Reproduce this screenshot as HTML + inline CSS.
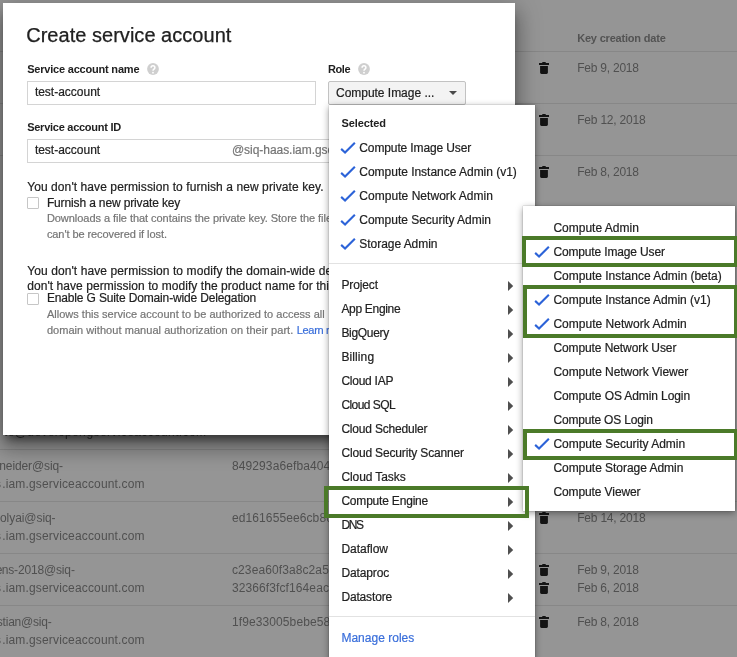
<!DOCTYPE html>
<html><head><meta charset="utf-8"><title>Create service account</title>
<style>
*{box-sizing:border-box;margin:0;padding:0}
html,body{width:737px;height:657px;overflow:hidden;background:#959595;font-family:"Liberation Sans",sans-serif}
body{position:relative}
.a{position:absolute;display:block}
.t{position:absolute;white-space:nowrap;-webkit-text-stroke-width:.2px}
.hl{position:absolute;left:0;width:737px;height:1px;background:#878787}
#dlg{position:absolute;left:3px;top:3px;width:512px;height:432px;background:#fff;box-shadow:0 8px 9px -4px rgba(0,0,0,.5),0 13px 19px 2px rgba(0,0,0,.24),0 5px 24px 4px rgba(0,0,0,.18)}
#clip{position:absolute;left:0;top:0;width:515px;height:435px;overflow:hidden}
.inp{position:absolute;border:1px solid #d4d4d4;background:#fff}
.q{position:absolute;width:12px;height:12px;border-radius:50%;background:#d6d6d6;color:#fff;font-size:10px;font-weight:bold;line-height:12.500px;text-align:center}
.cb{position:absolute;width:12px;height:12px;border:1px solid #c6c6c6;border-radius:1px;background:#fff}
#btn{position:absolute;left:328px;top:81px;width:138px;height:24px;border:1px solid #c2c2c2;border-radius:2px;background:#f3f3f3}
#menu{position:absolute;left:328.500px;top:105.300px;width:206px;height:570px;background:#fff;box-shadow:0 2px 7px rgba(0,0,0,.4),0 0 1px rgba(0,0,0,.4)}
#sub{position:absolute;left:523px;top:206.400px;width:212.400px;height:305px;background:#fff;box-shadow:0 2px 7px rgba(0,0,0,.4),0 0 1px rgba(0,0,0,.4)}
.sep{position:absolute;height:1px;background:#e2e2e2}
.gb{position:absolute;border:4px solid #4b7a29}
#root{position:absolute;left:0;top:0;width:737px;height:657px;will-change:transform}
</style></head><body><div id="root">

<div class="hl" style="top:51px"></div>
<div class="hl" style="top:103px"></div>
<div class="hl" style="top:155px"></div>
<div class="hl" style="top:449px"></div>
<div class="hl" style="top:501px"></div>
<div class="hl" style="top:553px"></div>
<div class="hl" style="top:605px"></div>
<div class="t" style="left:577.20px;top:31px;font-size:11px;line-height:14px;letter-spacing:-0.193px;color:#535353;font-weight:bold;-webkit-text-stroke-width:0;-webkit-text-stroke-width:0;">Key creation date</div>
<div class="t" style="left:577.20px;top:60px;font-size:12px;line-height:16px;letter-spacing:-0.228px;color:#505050;-webkit-text-stroke-width:0;">Feb 9, 2018</div>
<div class="t" style="left:577.20px;top:112px;font-size:12px;line-height:16px;letter-spacing:-0.204px;color:#505050;-webkit-text-stroke-width:0;">Feb 12, 2018</div>
<div class="t" style="left:577.20px;top:164px;font-size:12px;line-height:16px;letter-spacing:-0.228px;color:#505050;-webkit-text-stroke-width:0;">Feb 8, 2018</div>
<div class="t" style="left:577.20px;top:510px;font-size:12px;line-height:16px;letter-spacing:-0.204px;color:#505050;-webkit-text-stroke-width:0;">Feb 14, 2018</div>
<div class="t" style="left:577.20px;top:562px;font-size:12px;line-height:16px;letter-spacing:-0.228px;color:#505050;-webkit-text-stroke-width:0;">Feb 9, 2018</div>
<div class="t" style="left:577.20px;top:580px;font-size:12px;line-height:16px;letter-spacing:-0.228px;color:#505050;-webkit-text-stroke-width:0;">Feb 6, 2018</div>
<div class="t" style="left:577.20px;top:614px;font-size:12px;line-height:16px;letter-spacing:-0.228px;color:#505050;-webkit-text-stroke-width:0;">Feb 8, 2018</div>
<div class="t" style="left:-0.70px;top:458px;font-size:12px;line-height:16px;letter-spacing:-0.118px;color:#505050;-webkit-text-stroke-width:0;">neider@siq-</div>
<div class="t" style="left:0.00px;top:510px;font-size:12px;line-height:16px;letter-spacing:-0.067px;color:#505050;-webkit-text-stroke-width:0;">olyai@siq-</div>
<div class="t" style="left:-4.30px;top:562px;font-size:12px;line-height:16px;letter-spacing:0.000px;color:#505050;-webkit-text-stroke-width:0;">e</div>
<div class="t" style="left:1.70px;top:562px;font-size:12px;line-height:16px;letter-spacing:-0.153px;color:#505050;-webkit-text-stroke-width:0;">ns-2018@siq-</div>
<div class="t" style="left:-3.20px;top:614px;font-size:12px;line-height:16px;letter-spacing:0.000px;color:#505050;-webkit-text-stroke-width:0;">s</div>
<div class="t" style="left:2.60px;top:614px;font-size:12px;line-height:16px;letter-spacing:-0.221px;color:#505050;-webkit-text-stroke-width:0;">tian@siq-</div>
<div class="t" style="left:2.20px;top:476px;font-size:12px;line-height:16px;letter-spacing:0.160px;color:#505050;-webkit-text-stroke-width:0;">.iam.gserviceaccount.com</div>
<div class="t" style="left:-5.00px;top:476px;font-size:12px;line-height:16px;letter-spacing:0.000px;color:#505050;-webkit-text-stroke-width:0;">s</div>
<div class="t" style="left:2.20px;top:528px;font-size:12px;line-height:16px;letter-spacing:0.160px;color:#505050;-webkit-text-stroke-width:0;">.iam.gserviceaccount.com</div>
<div class="t" style="left:-5.00px;top:528px;font-size:12px;line-height:16px;letter-spacing:0.000px;color:#505050;-webkit-text-stroke-width:0;">s</div>
<div class="t" style="left:2.20px;top:580px;font-size:12px;line-height:16px;letter-spacing:0.160px;color:#505050;-webkit-text-stroke-width:0;">.iam.gserviceaccount.com</div>
<div class="t" style="left:-5.00px;top:580px;font-size:12px;line-height:16px;letter-spacing:0.000px;color:#505050;-webkit-text-stroke-width:0;">s</div>
<div class="t" style="left:2.20px;top:632px;font-size:12px;line-height:16px;letter-spacing:0.160px;color:#505050;-webkit-text-stroke-width:0;">.iam.gserviceaccount.com</div>
<div class="t" style="left:-5.00px;top:632px;font-size:12px;line-height:16px;letter-spacing:0.000px;color:#505050;-webkit-text-stroke-width:0;">s</div>
<div class="t" style="left:232.00px;top:458px;font-size:12px;line-height:16px;letter-spacing:0.100px;color:#505050;-webkit-text-stroke-width:0;">849293a6efba4041</div>
<div class="t" style="left:232.00px;top:510px;font-size:12px;line-height:16px;letter-spacing:0.100px;color:#505050;-webkit-text-stroke-width:0;">ed161655ee6cb8c</div>
<div class="t" style="left:232.00px;top:562px;font-size:12px;line-height:16px;letter-spacing:0.100px;color:#505050;-webkit-text-stroke-width:0;">c23ea60f3a8c2a5e</div>
<div class="t" style="left:232.00px;top:580px;font-size:12px;line-height:16px;letter-spacing:0.100px;color:#505050;-webkit-text-stroke-width:0;">32366f3fcf164eac</div>
<div class="t" style="left:232.00px;top:614px;font-size:12px;line-height:16px;letter-spacing:0.100px;color:#505050;-webkit-text-stroke-width:0;">1f9e33005bebe58d</div>
<div class="t" style="left:4.00px;top:424px;font-size:12px;line-height:16px;letter-spacing:0.378px;color:#3a3a3a;-webkit-text-stroke-width:0;">te@developer.gserviceaccount.com</div>
<svg class="a" style="left:539px;top:62px;width:10px;height:12px" viewBox="0 0 10 12"><path d="M0 1h3l.6-.9h2.800l.6.9h3v2H0zM1.100 4h7.800v6.500c0 .8-.6 1.400-1.400 1.400h-5c-.8 0-1.400-.6-1.400-1.400z" fill="#141414"/></svg>
<svg class="a" style="left:539px;top:114px;width:10px;height:12px" viewBox="0 0 10 12"><path d="M0 1h3l.6-.9h2.800l.6.9h3v2H0zM1.100 4h7.800v6.500c0 .8-.6 1.400-1.400 1.400h-5c-.8 0-1.400-.6-1.400-1.400z" fill="#141414"/></svg>
<svg class="a" style="left:539px;top:166px;width:10px;height:12px" viewBox="0 0 10 12"><path d="M0 1h3l.6-.9h2.800l.6.9h3v2H0zM1.100 4h7.800v6.500c0 .8-.6 1.400-1.400 1.400h-5c-.8 0-1.400-.6-1.400-1.400z" fill="#141414"/></svg>
<svg class="a" style="left:539px;top:512px;width:10px;height:12px" viewBox="0 0 10 12"><path d="M0 1h3l.6-.9h2.800l.6.9h3v2H0zM1.100 4h7.800v6.500c0 .8-.6 1.400-1.400 1.400h-5c-.8 0-1.400-.6-1.400-1.400z" fill="#141414"/></svg>
<svg class="a" style="left:539px;top:564px;width:10px;height:12px" viewBox="0 0 10 12"><path d="M0 1h3l.6-.9h2.800l.6.9h3v2H0zM1.100 4h7.800v6.500c0 .8-.6 1.400-1.400 1.400h-5c-.8 0-1.400-.6-1.400-1.400z" fill="#141414"/></svg>
<svg class="a" style="left:539px;top:582px;width:10px;height:12px" viewBox="0 0 10 12"><path d="M0 1h3l.6-.9h2.800l.6.9h3v2H0zM1.100 4h7.800v6.500c0 .8-.6 1.400-1.400 1.400h-5c-.8 0-1.400-.6-1.400-1.400z" fill="#141414"/></svg>
<svg class="a" style="left:539px;top:616px;width:10px;height:12px" viewBox="0 0 10 12"><path d="M0 1h3l.6-.9h2.800l.6.9h3v2H0zM1.100 4h7.800v6.500c0 .8-.6 1.400-1.400 1.400h-5c-.8 0-1.400-.6-1.400-1.400z" fill="#141414"/></svg>
<div id="dlg"></div><div id="clip">
<div class="inp" style="left:27px;top:81px;width:289px;height:24px"></div>
<div class="inp" style="left:27px;top:139px;width:320px;height:24px"></div>
<div class="cb" style="left:27px;top:197px"></div>
<div class="cb" style="left:27px;top:293px"></div>
<svg class="a" style="left:147px;top:63px;width:12px;height:12px" viewBox="0 0 12 12"><circle cx="6" cy="6" r="5.900" fill="#cfcfcf"/><path d="M4.100 4.700a1.900 1.900 0 0 1 3.800 0c0 1.300-1.900 1.500-1.900 3" fill="none" stroke="#fff" stroke-width="1.500"/><circle cx="6" cy="9.700" r=".9" fill="#fff"/></svg>
<svg class="a" style="left:358.2px;top:63px;width:12px;height:12px" viewBox="0 0 12 12"><circle cx="6" cy="6" r="5.900" fill="#cfcfcf"/><path d="M4.100 4.700a1.900 1.900 0 0 1 3.800 0c0 1.300-1.900 1.500-1.900 3" fill="none" stroke="#fff" stroke-width="1.500"/><circle cx="6" cy="9.700" r=".9" fill="#fff"/></svg>
<div class="t" style="left:26.20px;top:23px;font-size:20px;line-height:24px;letter-spacing:0.029px;color:#212121;-webkit-text-stroke:.25px #212121;">Create service account</div>
<div class="t" style="left:27.20px;top:62px;font-size:11px;line-height:14px;letter-spacing:-0.203px;color:#212121;font-weight:bold;-webkit-text-stroke-width:0;">Service account name</div>
<div class="t" style="left:328.00px;top:62px;font-size:11px;line-height:14px;letter-spacing:-0.406px;color:#212121;font-weight:bold;-webkit-text-stroke-width:0;">Role</div>
<div class="t" style="left:34.90px;top:84px;font-size:12px;line-height:16px;letter-spacing:-0.012px;color:#212121;">test-account</div>
<div class="t" style="left:27.20px;top:120px;font-size:11px;line-height:14px;letter-spacing:-0.264px;color:#212121;font-weight:bold;-webkit-text-stroke-width:0;">Service account ID</div>
<div class="t" style="left:34.90px;top:142px;font-size:12px;line-height:16px;letter-spacing:-0.012px;color:#212121;">test-account</div>
<div class="t" style="left:231.90px;top:142px;font-size:12px;line-height:16px;letter-spacing:-0.034px;color:#757575;">@siq-haas.iam.gserviceaccount.com</div>
<div class="t" style="left:27.20px;top:179px;font-size:12px;line-height:16px;letter-spacing:0.084px;color:#212121;">You don&#x27;t have permission to furnish a new private key.</div>
<div class="t" style="left:46.90px;top:195px;font-size:12px;line-height:16px;letter-spacing:-0.139px;color:#212121;">Furnish a new private key</div>
<div class="t" style="left:46.90px;top:211px;font-size:11px;line-height:14px;letter-spacing:-0.044px;color:#757575;">Downloads a file that contains the private key. Store the file securely</div>
<div class="t" style="left:46.90px;top:227px;font-size:11px;line-height:14px;letter-spacing:-0.072px;color:#757575;">can&#x27;t be recovered if lost.</div>
<div class="t" style="left:27.20px;top:263px;font-size:12px;line-height:16px;letter-spacing:0.095px;color:#212121;">You don&#x27;t have permission to modify the domain-wide delegation. You</div>
<div class="t" style="left:27.20px;top:278px;font-size:12px;line-height:16px;letter-spacing:0.060px;color:#212121;">don&#x27;t have permission to modify the product name for this project.</div>
<div class="t" style="left:46.90px;top:290px;font-size:12px;line-height:16px;letter-spacing:-0.150px;color:#212121;">Enable G Suite Domain-wide Delegation</div>
<div class="t" style="left:46.90px;top:307px;font-size:11px;line-height:14px;letter-spacing:0.015px;color:#757575;">Allows this service account to be authorized to access all</div>
<div class="t" style="left:46.90px;top:323px;font-size:11px;line-height:14px;letter-spacing:0.049px;color:#757575;">domain without manual authorization on their part.</div>
<div class="t" style="left:296.80px;top:323px;font-size:11px;line-height:14px;letter-spacing:-0.329px;color:#3a6fdb;">Learn more</div>
</div>
<div id="btn"></div>
<div class="a" style="left:448.8px;top:91px;width:0;height:0;border-left:4.500px solid transparent;border-right:4.500px solid transparent;border-top:4px solid #4a4a4a"></div>
<div id="menu"></div>
<div class="sep" style="left:329px;top:263.400px;width:206px"></div>
<div class="sep" style="left:329px;top:616px;width:206px"></div>
<div class="t" style="left:336.00px;top:85px;font-size:12px;line-height:16px;letter-spacing:-0.024px;color:#212121;">Compute Image ...</div>
<div class="t" style="left:341.40px;top:116px;font-size:11px;line-height:14px;letter-spacing:-0.090px;color:#212121;font-weight:bold;-webkit-text-stroke-width:0;">Selected</div>
<div class="t" style="left:359.30px;top:140px;font-size:12px;line-height:16px;letter-spacing:-0.121px;color:#212121;">Compute Image User</div>
<div class="t" style="left:359.30px;top:164px;font-size:12px;line-height:16px;letter-spacing:-0.021px;color:#212121;">Compute Instance Admin (v1)</div>
<div class="t" style="left:359.30px;top:188px;font-size:12px;line-height:16px;letter-spacing:0.040px;color:#212121;">Compute Network Admin</div>
<div class="t" style="left:359.30px;top:212px;font-size:12px;line-height:16px;letter-spacing:-0.017px;color:#212121;">Compute Security Admin</div>
<div class="t" style="left:359.30px;top:236px;font-size:12px;line-height:16px;letter-spacing:-0.042px;color:#212121;">Storage Admin</div>
<div class="t" style="left:341.40px;top:277px;font-size:12px;line-height:16px;letter-spacing:-0.119px;color:#212121;">Project</div>
<div class="t" style="left:341.40px;top:301px;font-size:12px;line-height:16px;letter-spacing:-0.309px;color:#212121;">App Engine</div>
<div class="t" style="left:341.40px;top:325px;font-size:12px;line-height:16px;letter-spacing:-0.317px;color:#212121;">BigQuery</div>
<div class="t" style="left:341.40px;top:349px;font-size:12px;line-height:16px;letter-spacing:0.110px;color:#212121;">Billing</div>
<div class="t" style="left:341.40px;top:373px;font-size:12px;line-height:16px;letter-spacing:-0.253px;color:#212121;">Cloud IAP</div>
<div class="t" style="left:341.40px;top:397px;font-size:12px;line-height:16px;letter-spacing:-0.553px;color:#212121;">Cloud SQL</div>
<div class="t" style="left:341.40px;top:421px;font-size:12px;line-height:16px;letter-spacing:-0.195px;color:#212121;">Cloud Scheduler</div>
<div class="t" style="left:341.40px;top:445px;font-size:12px;line-height:16px;letter-spacing:-0.160px;color:#212121;">Cloud Security Scanner</div>
<div class="t" style="left:341.40px;top:469px;font-size:12px;line-height:16px;letter-spacing:-0.086px;color:#212121;">Cloud Tasks</div>
<div class="t" style="left:341.40px;top:493px;font-size:12px;line-height:16px;letter-spacing:-0.194px;color:#212121;">Compute Engine</div>
<div class="t" style="left:341.40px;top:517px;font-size:12px;line-height:16px;letter-spacing:-1.316px;color:#212121;">DNS</div>
<div class="t" style="left:341.40px;top:541px;font-size:12px;line-height:16px;letter-spacing:-0.017px;color:#212121;">Dataflow</div>
<div class="t" style="left:341.40px;top:565px;font-size:12px;line-height:16px;letter-spacing:-0.127px;color:#212121;">Dataproc</div>
<div class="t" style="left:341.40px;top:589px;font-size:12px;line-height:16px;letter-spacing:-0.156px;color:#212121;">Datastore</div>
<div class="t" style="left:341.40px;top:630px;font-size:12px;line-height:16px;letter-spacing:0.017px;color:#3a6fdb;">Manage roles</div>
<svg class="a" style="left:339.5px;top:141px;width:17px;height:14px" viewBox="0 0 17 14"><path d="M1.150 7.900L5.050 11.450L14.850 1.700" fill="none" stroke="#2c63d8" stroke-width="2.1"/></svg>
<svg class="a" style="left:339.5px;top:165px;width:17px;height:14px" viewBox="0 0 17 14"><path d="M1.150 7.900L5.050 11.450L14.850 1.700" fill="none" stroke="#2c63d8" stroke-width="2.1"/></svg>
<svg class="a" style="left:339.5px;top:189px;width:17px;height:14px" viewBox="0 0 17 14"><path d="M1.150 7.900L5.050 11.450L14.850 1.700" fill="none" stroke="#2c63d8" stroke-width="2.1"/></svg>
<svg class="a" style="left:339.5px;top:213px;width:17px;height:14px" viewBox="0 0 17 14"><path d="M1.150 7.900L5.050 11.450L14.850 1.700" fill="none" stroke="#2c63d8" stroke-width="2.1"/></svg>
<svg class="a" style="left:339.5px;top:237px;width:17px;height:14px" viewBox="0 0 17 14"><path d="M1.150 7.900L5.050 11.450L14.850 1.700" fill="none" stroke="#2c63d8" stroke-width="2.1"/></svg>
<svg class="a" style="left:508px;top:281px;width:6px;height:10px" viewBox="0 0 6 10"><path d="M0 0L5.200 5L0 10z" fill="#4f4f4f"/></svg>
<svg class="a" style="left:508px;top:305px;width:6px;height:10px" viewBox="0 0 6 10"><path d="M0 0L5.200 5L0 10z" fill="#4f4f4f"/></svg>
<svg class="a" style="left:508px;top:329px;width:6px;height:10px" viewBox="0 0 6 10"><path d="M0 0L5.200 5L0 10z" fill="#4f4f4f"/></svg>
<svg class="a" style="left:508px;top:353px;width:6px;height:10px" viewBox="0 0 6 10"><path d="M0 0L5.200 5L0 10z" fill="#4f4f4f"/></svg>
<svg class="a" style="left:508px;top:377px;width:6px;height:10px" viewBox="0 0 6 10"><path d="M0 0L5.200 5L0 10z" fill="#4f4f4f"/></svg>
<svg class="a" style="left:508px;top:401px;width:6px;height:10px" viewBox="0 0 6 10"><path d="M0 0L5.200 5L0 10z" fill="#4f4f4f"/></svg>
<svg class="a" style="left:508px;top:425px;width:6px;height:10px" viewBox="0 0 6 10"><path d="M0 0L5.200 5L0 10z" fill="#4f4f4f"/></svg>
<svg class="a" style="left:508px;top:449px;width:6px;height:10px" viewBox="0 0 6 10"><path d="M0 0L5.200 5L0 10z" fill="#4f4f4f"/></svg>
<svg class="a" style="left:508px;top:473px;width:6px;height:10px" viewBox="0 0 6 10"><path d="M0 0L5.200 5L0 10z" fill="#4f4f4f"/></svg>
<svg class="a" style="left:508px;top:497px;width:6px;height:10px" viewBox="0 0 6 10"><path d="M0 0L5.200 5L0 10z" fill="#4f4f4f"/></svg>
<svg class="a" style="left:508px;top:521px;width:6px;height:10px" viewBox="0 0 6 10"><path d="M0 0L5.200 5L0 10z" fill="#4f4f4f"/></svg>
<svg class="a" style="left:508px;top:545px;width:6px;height:10px" viewBox="0 0 6 10"><path d="M0 0L5.200 5L0 10z" fill="#4f4f4f"/></svg>
<svg class="a" style="left:508px;top:569px;width:6px;height:10px" viewBox="0 0 6 10"><path d="M0 0L5.200 5L0 10z" fill="#4f4f4f"/></svg>
<svg class="a" style="left:508px;top:593px;width:6px;height:10px" viewBox="0 0 6 10"><path d="M0 0L5.200 5L0 10z" fill="#4f4f4f"/></svg>
<div id="sub"></div>
<div class="t" style="left:553.40px;top:220px;font-size:12px;line-height:16px;letter-spacing:0.003px;color:#212121;">Compute Admin</div>
<div class="t" style="left:553.40px;top:244px;font-size:12px;line-height:16px;letter-spacing:-0.144px;color:#212121;">Compute Image User</div>
<div class="t" style="left:553.40px;top:268px;font-size:12px;line-height:16px;letter-spacing:-0.015px;color:#212121;">Compute Instance Admin (beta)</div>
<div class="t" style="left:553.40px;top:292px;font-size:12px;line-height:16px;letter-spacing:-0.032px;color:#212121;">Compute Instance Admin (v1)</div>
<div class="t" style="left:553.40px;top:316px;font-size:12px;line-height:16px;letter-spacing:0.025px;color:#212121;">Compute Network Admin</div>
<div class="t" style="left:553.40px;top:340px;font-size:12px;line-height:16px;letter-spacing:-0.090px;color:#212121;">Compute Network User</div>
<div class="t" style="left:553.40px;top:364px;font-size:12px;line-height:16px;letter-spacing:-0.045px;color:#212121;">Compute Network Viewer</div>
<div class="t" style="left:553.40px;top:388px;font-size:12px;line-height:16px;letter-spacing:-0.097px;color:#212121;">Compute OS Admin Login</div>
<div class="t" style="left:553.40px;top:412px;font-size:12px;line-height:16px;letter-spacing:-0.172px;color:#212121;">Compute OS Login</div>
<div class="t" style="left:553.40px;top:436px;font-size:12px;line-height:16px;letter-spacing:-0.017px;color:#212121;">Compute Security Admin</div>
<div class="t" style="left:553.40px;top:460px;font-size:12px;line-height:16px;letter-spacing:-0.041px;color:#212121;">Compute Storage Admin</div>
<div class="t" style="left:553.40px;top:484px;font-size:12px;line-height:16px;letter-spacing:-0.099px;color:#212121;">Compute Viewer</div>
<svg class="a" style="left:534px;top:244.6px;width:17px;height:14px" viewBox="0 0 17 14"><path d="M1.150 7.900L5.050 11.450L14.850 1.700" fill="none" stroke="#2c63d8" stroke-width="2.1"/></svg>
<svg class="a" style="left:534px;top:292.6px;width:17px;height:14px" viewBox="0 0 17 14"><path d="M1.150 7.900L5.050 11.450L14.850 1.700" fill="none" stroke="#2c63d8" stroke-width="2.1"/></svg>
<svg class="a" style="left:534px;top:316.6px;width:17px;height:14px" viewBox="0 0 17 14"><path d="M1.150 7.900L5.050 11.450L14.850 1.700" fill="none" stroke="#2c63d8" stroke-width="2.1"/></svg>
<svg class="a" style="left:534px;top:436.6px;width:17px;height:14px" viewBox="0 0 17 14"><path d="M1.150 7.900L5.050 11.450L14.850 1.700" fill="none" stroke="#2c63d8" stroke-width="2.1"/></svg>
<div class="gb" style="left:324px;top:486px;width:205px;height:32px"></div>
<div class="gb" style="left:522.3px;top:236px;width:215.7px;height:31px"></div>
<div class="gb" style="left:523px;top:285px;width:215px;height:53px"></div>
<div class="gb" style="left:523px;top:429px;width:215px;height:31px"></div>
</div></body></html>
